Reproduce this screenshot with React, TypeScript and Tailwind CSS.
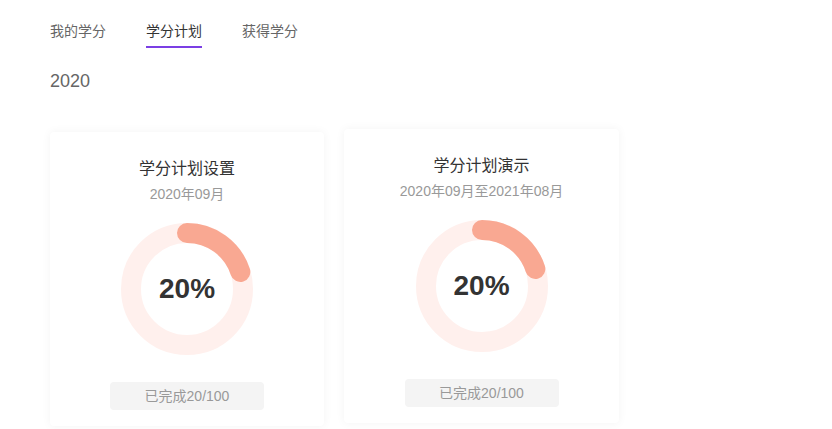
import React from "react";

const FONT = '"Liberation Sans", "Noto Sans CJK SC", sans-serif';

function Ring({ pct }: { pct: number }) {
  const r = 56;
  const c = 2 * Math.PI * r;
  return (
    <div className="relative w-[132px] h-[132px]">
      <svg width="132" height="132" viewBox="0 0 132 132" className="block">
        <circle cx="66" cy="66" r={r} fill="none" stroke="#fff0ed" strokeWidth="20" />
        <circle
          cx="66"
          cy="66"
          r={r}
          fill="none"
          stroke="#f9a892"
          strokeWidth="20"
          strokeLinecap="round"
          strokeDasharray={`${(c * pct) / 100} ${c}`}
          transform="rotate(-90 66 66)"
        />
      </svg>
      <div className="absolute inset-0 flex items-center justify-center text-[28px] font-bold text-[#333] leading-none">
        {pct}%
      </div>
    </div>
  );
}

function Card({ title, date, extra }: { title: string; date: string; extra: string }) {
  return (
    <div
      className={`h-[294px] bg-white rounded-[4px] shadow-[0_0_10px_rgba(0,0,0,0.05)] flex flex-col items-center pt-[26px] ${extra}`}
    >
      <div className="text-[16px] leading-[22px] text-[#333]">{title}</div>
      <div className="mt-[5px] text-[14px] leading-[18px] text-[#999]">{date}</div>
      <div className="mt-[20px]">
        <Ring pct={20} />
      </div>
      <div className="mt-[27px] w-[154px] h-[28px] rounded-[4px] bg-[#f4f4f4] flex items-center justify-center text-[14px] text-[#999]">
        已完成20/100
      </div>
    </div>
  );
}

export default function App() {
  return (
    <div className="w-[832px] h-[429px] bg-white overflow-hidden pl-[50px] pr-[50px] pt-[21px]" style={{ fontFamily: FONT }}>
      <div className="flex gap-[40px]">
        <div className="flex flex-col">
          <div className="text-[14px] leading-5 text-[#666]">我的学分</div>
          <div className="mt-[5px] h-[2px]" />
        </div>
        <div className="flex flex-col">
          <div className="text-[14px] leading-5 text-[#333]">学分计划</div>
          <div className="mt-[5px] h-[2px] bg-[#7b3fe4]" />
        </div>
        <div className="flex flex-col">
          <div className="text-[14px] leading-5 text-[#666]">获得学分</div>
          <div className="mt-[5px] h-[2px]" />
        </div>
      </div>
      <div className="mt-[21px] text-[18px] leading-6 text-[#666]">2020</div>
      <div className="mt-[36px] flex items-start gap-[20px]">
        <Card title="学分计划设置" date="2020年09月" extra="mt-[3px] w-[274px]" />
        <Card title="学分计划演示" date="2020年09月至2021年08月" extra="w-[275px]" />
      </div>
    </div>
  );
}
